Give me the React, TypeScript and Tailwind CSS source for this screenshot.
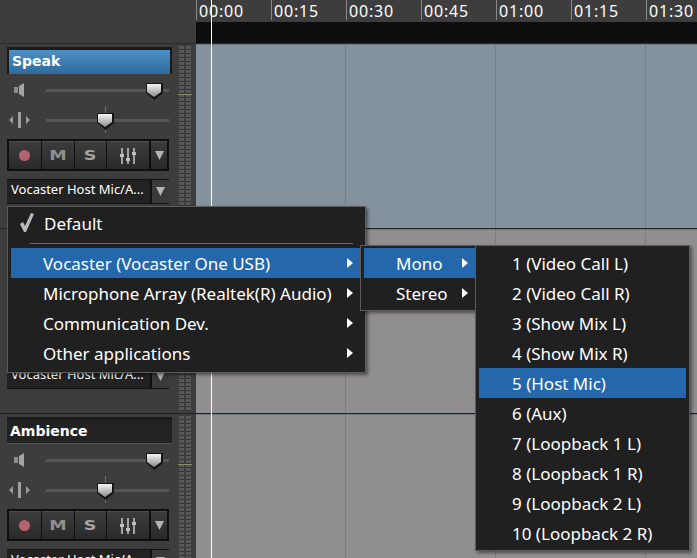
import { ReactNode } from "react";

const ticks = ["00:00", "00:15", "00:30", "00:45", "01:00", "01:15", "01:30"];
const devices = [
  "Vocaster (Vocaster One USB)",
  "Microphone Array (Realtek(R) Audio)",
  "Communication Dev.",
  "Other applications",
];
const inputs = [
  "1 (Video Call L)",
  "2 (Video Call R)",
  "3 (Show Mix L)",
  "4 (Show Mix R)",
  "5 (Host Mic)",
  "6 (Aux)",
  "7 (Loopback 1 L)",
  "8 (Loopback 1 R)",
  "9 (Loopback 2 L)",
  "10 (Loopback 2 R)",
];

function Caret() {
  return (
    <svg width="9" height="9" viewBox="0 0 9 9" className="block">
      <path d="M0 0L9 0L4.5 9Z" fill="#b4b4b4" />
    </svg>
  );
}

function Thumb({ id }: { id: string }) {
  return (
    <svg width="17" height="17" viewBox="0 0 17 17" className="block">
      <defs>
        <linearGradient id={id} x1="0" y1="0" x2="0" y2="1">
          <stop offset="0" stopColor="#f4f4f4" />
          <stop offset="1" stopColor="#8c8c8c" />
        </linearGradient>
      </defs>
      <path d="M0 0H17V10L8.5 17L0 10Z" fill="#151515" />
      <path d="M1 1H15V9L8 14L1 9Z" fill={`url(#${id})`} />
    </svg>
  );
}

function Slider({ left, id, center }: { left: number; id: string; center?: boolean }) {
  return (
    <div className="relative h-[20px] w-[123px] flex items-center">
      <div className="h-[3px] w-full bg-[#565656]" />
      {center && <div className="absolute left-[59px] top-[-4px] h-[27px] w-px bg-[#6e6e6e]" />}
      <div className="absolute top-[3px]" style={{ left }}>
        <Thumb id={id} />
      </div>
    </div>
  );
}

function TrackButton({ width, children }: { width: string; children: ReactNode }) {
  return (
    <div className={`${width} h-full flex items-center justify-center bg-gradient-to-b from-[#3c3c3c] to-[#2a2a2a] border-t border-[#4c4c4c]`}>
      {children}
    </div>
  );
}

function Meter() {
  return (
    <div className="h-[180px] w-[5px] bg-[repeating-linear-gradient(to_bottom,#575757_0px,#575757_3px,#343434_3px,#343434_4px)]" />
  );
}

function Track({ name, active, covered, idx }: { name: string; active?: boolean; covered?: boolean; idx: number }) {
  const hide = covered ? "invisible" : "";
  return (
    <div className="flex h-[185px] shrink-0 border-b border-[#222]">
      <div className="w-[178px] shrink-0 bg-[#3d3d3d] pl-[7px] pt-[3px] flex flex-col">
        <div
          className={`${hide} w-[165px] h-[27px] border-t-[3px] border-[#1a1a1a] pl-[3px] pb-[1px] flex items-center font-['DejaVu_Sans'] font-bold text-[14px] text-white ${
            active
              ? "bg-gradient-to-b from-[#4d90c6] to-[#2e6b9e] border-x-2"
              : "bg-[#222222] border-b border-b-[#555]"
          }`}
        >
          {name}
        </div>
        <div className={`${hide} flex items-center h-[20px] mt-[6px]`}>
          <svg width="12" height="14" viewBox="0 0 12 14" className="ml-[7px] mr-[20px] shrink-0">
            <path d="M0 4H4V10H0Z" fill="#8d8d8d" />
            <path d="M5 3L10 0V14L5 11Z" fill="#a5a5a5" />
          </svg>
          <Slider left={100} id={`vol-${idx}`} />
        </div>
        <div className={`${hide} flex items-center h-[20px] mt-[10px]`}>
          <svg width="22" height="16" viewBox="0 0 22 16" className="mr-[15px] ml-[2px] shrink-0">
            <path d="M0 8L4 4V12Z" fill="#9a9a9a" />
            <path d="M9 0H12V16H9Z" fill="#a0a0a0" />
            <path d="M21 8L17 4V12Z" fill="#9a9a9a" />
          </svg>
          <Slider left={51} id={`pan-${idx}`} center />
        </div>
        <div className={`${hide} mt-[9px] w-[162px] h-[32px] bg-[#0e0e0e] p-[2px] flex gap-[1px] shrink-0`}>
          <TrackButton width="w-[32px]">
            <div className="size-[11px] rounded-full bg-[#b5616f]" />
          </TrackButton>
          <TrackButton width="w-[32px]">
            <span className="font-['DejaVu_Sans'] text-[14px] font-bold text-[#8f8f8f] scale-x-125">M</span>
          </TrackButton>
          <TrackButton width="w-[32px]">
            <span className="font-['DejaVu_Sans'] text-[14px] font-bold text-[#a4a4a4] scale-x-125">S</span>
          </TrackButton>
          <TrackButton width="w-[42px]">
            <svg width="16" height="16" viewBox="0 0 16 16">
              <path d="M2 0V16M8 0V16M14 0V16" stroke="#c0c0c0" strokeWidth="1.6" />
              <path d="M0 6H4V9H0ZM6 10H10V13H6ZM12 4H16V7H12Z" fill="#c0c0c0" />
            </svg>
          </TrackButton>
          <TrackButton width="w-[16px] ml-[1px]">
            <Caret />
          </TrackButton>
        </div>
        <div className="mt-[8px] w-[162px] h-[25px] bg-[#222222] border-y border-[#111] flex items-center shrink-0">
          <span className="pl-[4px] pb-[3px] flex-1 font-['Noto_Sans'] text-[13px] text-white whitespace-nowrap">
            Vocaster Host Mic/A...
          </span>
          <div className="w-[19px] shrink-0 h-full bg-[#3a3a3a] border-l-2 border-[#111] flex items-center justify-center">
            <Caret />
          </div>
        </div>
      </div>
      <div className="relative w-[18px] shrink-0 bg-[#3d3d3d] pt-[2px] pl-[1px] flex gap-[2px] items-start">
        <Meter />
        <Meter />
        <div className="absolute left-0 top-[50px] h-px w-[14px] bg-[#8b8b6c]" />
      </div>
      <div
        className={`flex-1 grid grid-cols-[150px_150px_150px_1fr] border-t border-[#6f7a83] ${
          active ? "bg-[#84929d]" : "bg-[#908e8e]"
        }`}
      >
        <div className="border-r border-[#73808a]" />
        <div className="border-r border-[#73808a]" />
        <div className="border-r border-[#73808a]" />
        <div />
      </div>
    </div>
  );
}

function MenuRow({ label, indent, selected, arrow }: { label: string; indent: string; selected?: boolean; arrow?: string }) {
  return (
    <div className={`relative h-[30px] pt-[1px] flex items-center ${indent} whitespace-nowrap ${selected ? "bg-[#2468ab]" : ""}`}>
      {label}
      {arrow && (
        <svg width="6" height="10" viewBox="0 0 6 10" className={`absolute top-[10px] ${arrow}`}>
          <path d="M0 0L6 5L0 10Z" fill="#fff" />
        </svg>
      )}
    </div>
  );
}

export default function App() {
  return (
    <div className="relative w-[697px] h-[558px] overflow-hidden bg-[#3d3d3d] font-['Noto_Sans']">
      <div className="flex h-[44px] border-b border-[#2a2a2a]">
        <div className="w-[196px] shrink-0" />
        <div className="flex-1 flex flex-col">
          <div className="h-[22px] flex bg-[#3d3d3d]">
            {ticks.map((t) => (
              <div
                key={t}
                className="w-[75px] shrink-0 h-[20px] border-l border-[#8a8a8a] pl-[2px] text-[16px] leading-[22px] text-white tracking-[0.8px]"
              >
                {t}
              </div>
            ))}
          </div>
          <div className="flex-1 bg-[#0e0e0e]" />
        </div>
      </div>
      <Track name="Speak" active idx={1} />
      <Track name="Track" covered idx={2} />
      <Track name="Ambience" idx={3} />

      {/* playhead */}
      <div className="absolute left-[211px] top-0 bottom-0 w-px bg-white" />

      {/* device menu */}
      <div className="absolute left-[7px] top-[206px] w-[359px] h-[167px] bg-[#202020] border border-[#5c5c5c] pt-[2px] px-[3px] text-[17px] text-white shadow-[2px_2px_3px_rgba(0,0,0,0.45)]">
        <div className="relative h-[30px] flex items-center pl-[33px]">
          <svg width="14" height="20" viewBox="0 0 14 20" className="absolute left-[9px] top-[4px]">
            <path d="M0 11L3 9L5 13L11 0L14 1L6 19H4Z" fill="#b9b9b9" />
          </svg>
          Default
        </div>
        <div className="h-px bg-[#6a6a6a] ml-[19px] mr-[9px] mt-[4px] mb-[4px]" />
        {devices.map((d, i) => (
          <MenuRow key={d} label={d} indent="pl-[32px]" selected={i === 0} arrow="left-[336px]" />
        ))}
      </div>

      {/* channel type menu */}
      <div className="absolute left-[360px] top-[245px] w-[116px] h-[66px] bg-[#202020] border border-[#5c5c5c] pt-[2px] pl-[3px] text-[17px] text-white shadow-[2px_2px_3px_rgba(0,0,0,0.45)]">
        <MenuRow label="Mono" indent="pl-[32px]" selected arrow="left-[98px]" />
        <MenuRow label="Stereo" indent="pl-[32px]" arrow="left-[98px]" />
      </div>

      {/* input menu */}
      <div className="absolute left-[475px] top-[245px] w-[215px] h-[306px] bg-[#202020] border border-[#5c5c5c] pt-[2px] px-[3px] text-[17px] text-white shadow-[2px_2px_3px_rgba(0,0,0,0.45)]">
        {inputs.map((d, i) => (
          <MenuRow key={d} label={d} indent="pl-[33px]" selected={i === 4} />
        ))}
      </div>
    </div>
  );
}
